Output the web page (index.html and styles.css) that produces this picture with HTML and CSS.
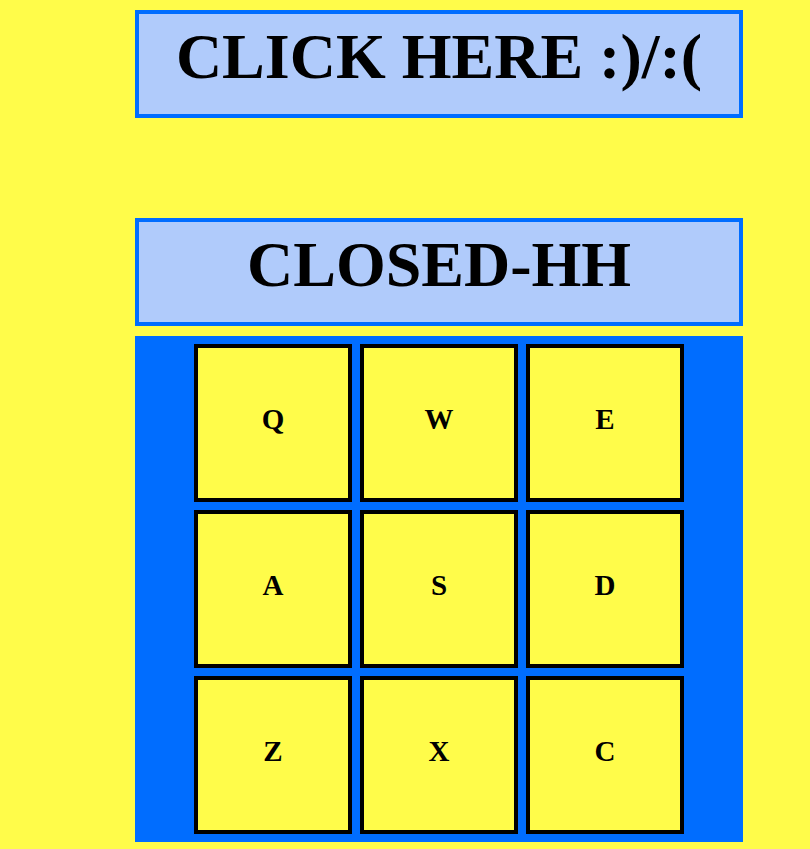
FILE: index.html
```html
<!DOCTYPE html>
<html>
<head>
<meta charset="utf-8">
<title>Closed HH</title>
<link rel="stylesheet" href="styles.css">
</head>
<body>
<div class="page">
  <div class="banner">CLICK HERE :)/:(</div>
  <div class="banner banner-title">CLOSED-HH</div>
  <div class="pad">
    <div class="key">Q</div>
    <div class="key">W</div>
    <div class="key">E</div>
    <div class="key">A</div>
    <div class="key">S</div>
    <div class="key">D</div>
    <div class="key">Z</div>
    <div class="key">X</div>
    <div class="key">C</div>
  </div>
</div>
</body>
</html>
```
FILE: styles.css
```css
html, body {
  margin: 0;
  padding: 0;
}
body {
  background: #fffc4a;
  font-family: "Liberation Serif", "Times New Roman", serif;
  color: #000;
}
.page {
  width: 608px;
  padding: 10px 0 0 135px;
}
.banner {
  border: 4px solid #006dff;
  background: #b0cbfb;
  height: 89px;
  padding-top: 11px;
  font-size: 64px;
  line-height: 64px;
  font-weight: bold;
  text-align: center;
}
.banner-title {
  margin-top: 100px;
}
.pad {
  margin-top: 10px;
  background: #006dff;
  padding: 8px;
  display: grid;
  grid-template-columns: repeat(3, 158px);
  grid-auto-rows: 158px;
  gap: 8px;
  justify-content: center;
}
.key {
  border: 4px solid #000;
  background: #fffc4a;
  display: flex;
  align-items: center;
  justify-content: center;
  font-size: 29px;
  font-weight: bold;
  padding-bottom: 8px;
}
```
